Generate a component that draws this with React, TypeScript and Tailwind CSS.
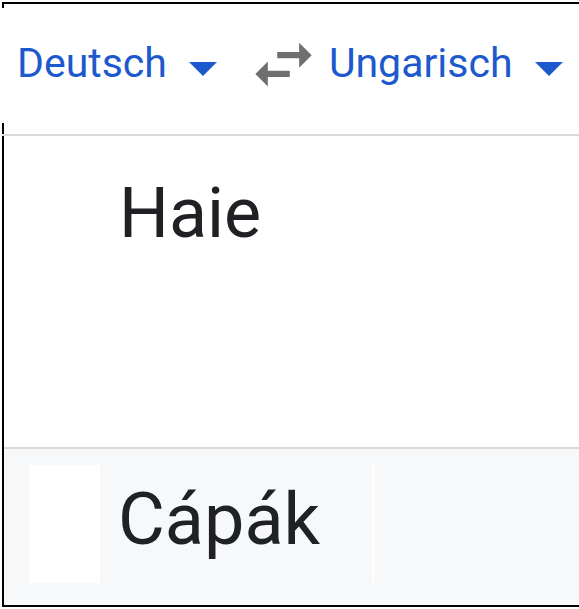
import React from 'react';

const Caret = ({ className }: { className?: string }) => (
  <svg width="28" height="14" viewBox="0 0 28 14" className={className}>
    <polygon points="0,0 28,0 14,14" fill="#1d59cc" />
  </svg>
);

const SwapIcon = () => (
  <svg width="75" height="75" viewBox="0 0 24 24" className="shrink-0">
    <path
      d="M6.99 11L3 15l3.99 4v-3H14v-2H6.99v-3zM21 9l-3.99-4v3H10v2h7.01v3L21 9z"
      fill="#6f6f6f"
    />
  </svg>
);

export default function App() {
  return (
    <div
      className="w-full h-[609px] bg-white pt-[2px] pl-[2px] overflow-hidden"
      style={{ fontFamily: 'Roboto, "Noto Sans", sans-serif' }}
    >
      <div className="flex flex-col border-t-2 border-b-2 border-black">
        {/* Language bar */}
        <div className="flex h-[130px]">
          <div className="flex flex-col w-[2px] shrink-0">
            <div className="h-[4px] bg-black" />
            <div className="flex-1" />
            <div className="h-[11px] bg-black" />
          </div>
          <div className="flex items-start">
            <span className="ml-[13px] mt-[39px] text-[41px] leading-[41px] text-[#1d59cc] whitespace-nowrap">
              Deutsch
            </span>
            <Caret className="ml-[22px] mt-[58px] shrink-0" />
            <div className="ml-[29px] mt-[23px]">
              <SwapIcon />
            </div>
            <span className="ml-[8px] mt-[39px] text-[41px] leading-[41px] text-[#1d59cc] whitespace-nowrap">
              Ungarisch
            </span>
            <Caret className="ml-[22px] mt-[58px] shrink-0" />
          </div>
        </div>
        <div className="h-[2px] bg-[#dadada]" />

        {/* Source text */}
        <div className="h-[311px] bg-white border-l-2 border-black pl-[115px] pt-[42px]">
          <span className="text-[70px] leading-[70px] text-[#202124]">Haie</span>
        </div>
        <div className="h-[2px] bg-[#d9d9d9] border-l-2 border-black" />

        {/* Translation */}
        <div className="h-[156px] bg-[#f7f8fa] border-l-2 border-black flex items-start">
          <div className="ml-[26px] mt-[16px] w-[70px] h-[118px] bg-white shrink-0" />
          <span className="ml-[18px] mt-[35px] text-[72px] leading-[72px] text-[#202124] whitespace-nowrap">
            Cápák
          </span>
          <div className="ml-[52px] mt-[13px] w-[2px] h-[120px] bg-white shrink-0" />
        </div>
      </div>
    </div>
  );
}
